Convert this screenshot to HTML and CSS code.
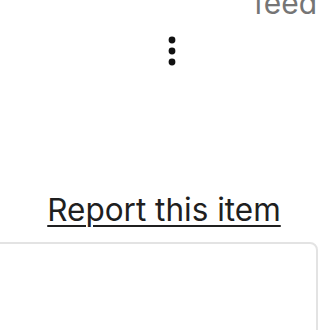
FILE: index.html
```html
<!DOCTYPE html>
<html lang="en">
<head>
    <meta charset="UTF-8">
    <meta name="viewport" content="width=device-width, initial-scale=1.0">
    <title>Item</title>
    <link rel="stylesheet" href="styles.css">
</head>
<body>
    <div class="page">
        <div class="feedTitle">feed</div>

        <button class="moreBtn" aria-label="More options">
            <svg width="8" height="30" viewBox="0 0 8 30">
                <circle cx="4" cy="4" r="3.4"/>
                <circle cx="4" cy="15" r="3.4"/>
                <circle cx="4" cy="26" r="3.4"/>
            </svg>
        </button>

        <div class="report"><a href="#">Report this item</a></div>

        <div class="card"></div>
    </div>
</body>
</html>
```

FILE: styles.css
```css
*{
    margin: 0;
    padding: 0;
    box-sizing: border-box;
}

body{
    background: #fff;
    font-family: Inter, "Noto Sans", sans-serif;
    overflow: hidden;
    height: 330px;
}

.page{
    display: flex;
    flex-direction: column;
}

.feedTitle{
    align-self: flex-end;
    margin-right: 15px;
    margin-top: -15px;
    font-size: 30px;
    line-height: 36px;
    color: #757575;
}

.moreBtn{
    align-self: flex-start;
    margin-left: 168px;
    margin-top: 15px;
    border: none;
    background: none;
    display: flex;
}

.moreBtn svg{
    fill: #111;
}

.report{
    margin-top: 126px;
    padding-right: 4px;
    text-align: center;
}

.report a{
    font-size: 31.5px;
    line-height: 36px;
    color: #1f1f1f;
    text-decoration: underline;
    text-decoration-thickness: 2px;
    text-underline-offset: 4px;
}

.card{
    margin-top: 14px;
    margin-left: -20px;
    margin-right: 14px;
    height: 120px;
    border: 2px solid #e3e3e3;
    border-radius: 8px;
}
```
